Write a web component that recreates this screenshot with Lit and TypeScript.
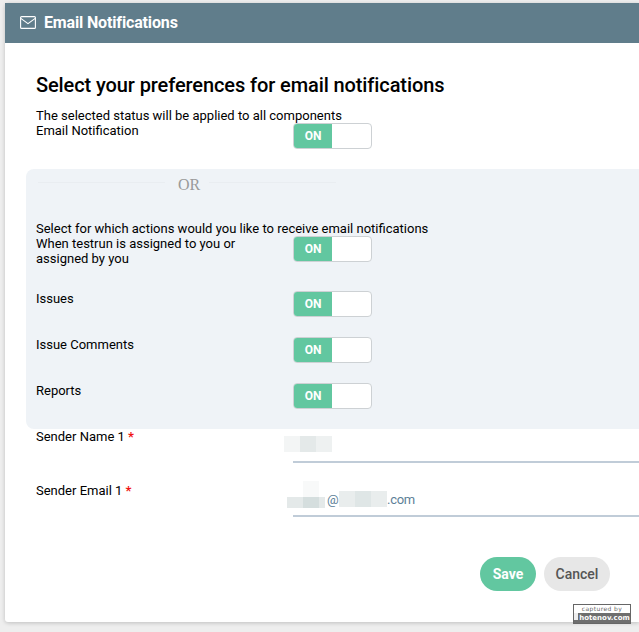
import { LitElement, css, html } from "lit";
import { customElement, property } from "lit/decorators.js";

@customElement("toggle-switch")
export class ToggleSwitch extends LitElement {
  static styles = css`
    :host {
      display: block;
      width: 79px;
      height: 26px;
    }
    .switch {
      box-sizing: border-box;
      display: flex;
      width: 79px;
      height: 26px;
      background: #fff;
      border: 1px solid #cdd1d4;
      border-radius: 4px;
      overflow: hidden;
    }
    .on {
      width: 38px;
      background: #62c7a0;
      color: #fff;
      font: 700 12px/24px Roboto, sans-serif;
      text-align: center;
    }
  `;

  render() {
    return html`<div class="switch"><div class="on">ON</div></div>`;
  }
}

@customElement("app-root")
export class AppRoot extends LitElement {
  @property() title = "Email Notifications";

  static styles = css`
    :host {
      display: block;
      width: 639px;
      height: 632px;
      overflow: hidden;
      background: #eeeeee;
      font-family: Roboto, sans-serif;
      color: #000;
    }
    .card {
      position: relative;
      box-sizing: border-box;
      width: 634px;
      height: 619px;
      margin: 3px 0 0 5px;
      background: #fff;
      border-radius: 3px 0 0 3px;
      box-shadow: 0 1px 4px rgba(0, 0, 0, 0.2);
    }
    .head {
      display: flex;
      align-items: center;
      gap: 8px;
      box-sizing: border-box;
      height: 40px;
      padding: 0 0 1px 15px;
      background: #607d8b;
      color: #fff;
      font-size: 16px;
      font-weight: 700;
      letter-spacing: -0.15px;
    }
    .head svg {
      display: block;
    }
    .body {
      padding: 30px 0 0 31px;
    }
    h2 {
      margin: 0;
      font-size: 20px;
      font-weight: 500;
      line-height: 24px;
      letter-spacing: -0.1px;
    }
    .note,
    .label {
      font-size: 13px;
      font-weight: 400;
      line-height: 15px;
    }
    .note {
      margin-top: 11px;
    }
    .row {
      display: flex;
    }
    .label {
      width: 257px;
      flex: none;
    }
    .panel {
      margin: 20px 0 0 -10px;
      height: 260px;
      box-sizing: border-box;
      padding: 0 0 0 10px;
      background: #eff3f7;
      border-radius: 8px 0 0 8px;
    }
    .or {
      display: flex;
      align-items: center;
      width: 298px;
      margin-left: 2px;
      padding-top: 7px;
      gap: 12px;
      color: #9a9a9a;
      font: 16px/17px "Liberation Serif", serif;
    }
    .or span {
      margin: 0 -3px 0 1px;
    }
    .or i {
      flex: 1;
      height: 1px;
      margin-top: -4px;
      background: #e9edf1;
    }
    .panel .note {
      margin-top: 28px;
    }
    .panel .row {
      height: 46px;
    }
    .panel .row.assigned {
      height: 55px;
    }
    .field {
      display: flex;
      height: 54px;
    }
    .field .label b {
      color: #f01414;
      font-weight: 700;
    }
    .input {
      position: relative;
      flex: 1;
      height: 32px;
      border-bottom: 2px solid #c0ccd8;
      color: #5d7f97;
      font-size: 13px;
    }
    .mail {
      position: absolute;
      left: 34px;
      top: 8px;
      line-height: 17px;
    }
    .blur {
      position: absolute;
      display: flex;
    }
    .blur i {
      display: block;
      height: 100%;
    }
    .actions {
      display: flex;
      justify-content: flex-end;
      gap: 8px;
      padding: 20px 29px 0 0;
    }
    button {
      height: 34px;
      padding: 0;
      border: 0;
      border-radius: 17px;
      font: 700 14px Roboto, sans-serif;
    }
    .save {
      width: 56px;
      background: #62c7a0;
      color: #fff;
    }
    .cancel {
      width: 66px;
      background: #e7e7e7;
      color: #555;
      font-weight: 500;
    }
    .stamp {
      position: absolute;
      left: 568px;
      top: 601px;
      box-sizing: border-box;
      width: 58px;
      height: 20px;
      border: 1px solid #666;
      background: #fff;
      font: 6px/8px "DejaVu Sans", sans-serif;
      color: #666;
      text-align: center;
      letter-spacing: 0.4px;
    }
    .stamp div {
      height: 10px;
      background: #6e6e6e;
      color: #fff;
      font-size: 7px;
      font-weight: 700;
      line-height: 10px;
      letter-spacing: 0;
      white-space: nowrap;
    }
    .stamp em {
      display: inline-block;
      width: 4px;
      height: 7px;
      margin-right: 1px;
      background: #eee;
    }
  `;

  renderBlur(cells: [string, number][], left: number, top: number, h: number) {
    return html`<div class="blur" style="left:${left}px;top:${top}px;height:${h}px">
      ${cells.map(([c, w]) => html`<i style="background:${c};width:${w}px"></i>`)}
    </div>`;
  }

  render() {
    return html`<div class="card">
      <div class="head">
        <svg width="16" height="13" viewBox="0 0 16 13" fill="none" stroke="#fff" stroke-width="1.1">
          <rect x="0.6" y="0.6" width="14.8" height="11.8" rx="1"></rect>
          <path d="M0.8 2.4 8 7.6l7.2-5.2"></path>
        </svg>
        <span>${this.title}</span>
      </div>
      <div class="body">
        <h2>Select your preferences for email notifications</h2>
        <div class="note">The selected status will be applied to all components</div>
        <div class="row first">
          <div class="label">Email Notification</div>
          <toggle-switch></toggle-switch>
        </div>
        <div class="panel">
          <div class="or"><i></i><span>OR</span><i></i></div>
          <div class="note">Select for which actions would you like to receive email notifications</div>
          <div class="row assigned">
            <div class="label">When testrun is assigned to you or<br />assigned by you</div>
            <toggle-switch></toggle-switch>
          </div>
          <div class="row">
            <div class="label">Issues</div>
            <toggle-switch></toggle-switch>
          </div>
          <div class="row">
            <div class="label">Issue Comments</div>
            <toggle-switch></toggle-switch>
          </div>
          <div class="row">
            <div class="label">Reports</div>
            <toggle-switch></toggle-switch>
          </div>
        </div>
        <div class="field">
          <div class="label">Sender Name 1 <b>*</b></div>
          <div class="input">
            ${this.renderBlur([["#f3f5f5", 16], ["#e4e9e9", 16], ["#eef1f1", 16]], -9, 7, 16)}
          </div>
        </div>
        <div class="field">
          <div class="label">Sender Email 1 <b>*</b></div>
          <div class="input">
            <span class="mail">@</span>
            <span class="mail" style="left:94px;letter-spacing:-0.3px">.com</span>
            ${this.renderBlur([["#f8f9f9", 16]], 10, -2, 16)}
            ${this.renderBlur([["#e4e9e9", 16], ["#d5dede", 16], ["#e4e9e9", 6]], -6, 14, 11)}
            ${this.renderBlur([["#e9eded", 16], ["#dfe6e6", 16], ["#e9eded", 16]], 46, 8, 16)}
          </div>
        </div>
        <div class="actions">
          <button class="save">Save</button>
          <button class="cancel">Cancel</button>
        </div>
      </div>
      <div class="stamp">captured by<div><em></em>hotenov.com</div></div>
    </div>`;
  }
}
